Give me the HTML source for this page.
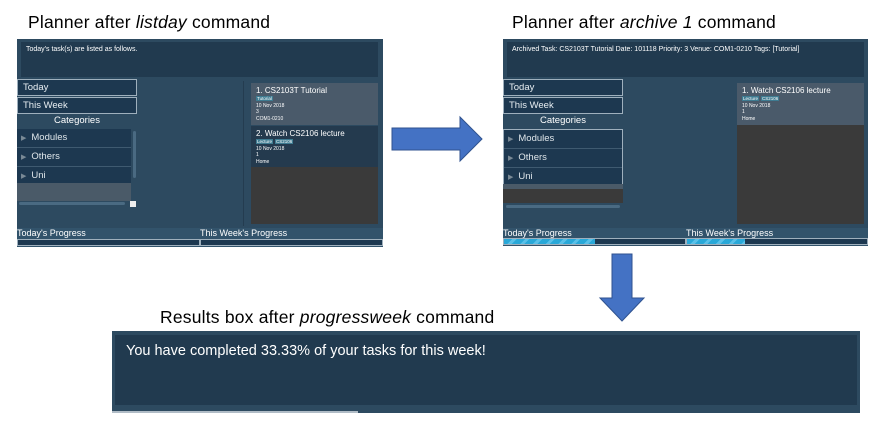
<!DOCTYPE html>
<html><head><meta charset="utf-8"><style>
*{margin:0;padding:0;box-sizing:border-box}
body{width:888px;height:446px;background:#fff;position:relative;overflow:hidden;font-family:"Liberation Sans",sans-serif}
.a{position:absolute}
.cap{font-size:17.5px;color:#000;white-space:nowrap;letter-spacing:0.2px}
.p{background:#2d4a60;overflow:hidden}
.rb{background:#213a4f;color:#fff;font-size:7px;padding:4px 5px;white-space:nowrap}
.btn{background:#1d3850;border:1px solid #9fb0bd;color:#e8eef2;font-size:9.5px;padding-left:5px;line-height:15px}
.cat{background:#1d3850;border-bottom:1px solid #3f5a70;color:#dfe6ea;font-size:9.5px;line-height:17px;padding-left:4px}
.cat b{font-weight:normal;color:#7a8a96;font-size:7px;margin-right:5px}
.card{color:#fff;font-size:5px;line-height:6.5px;padding:3px 5px}
.card .t{font-size:8px;line-height:10px}
.tag{background:#3e7b91;color:#fff;padding:0 1px;margin-right:2px;font-size:4.5px}
.pl{font-size:9px;color:#fff;line-height:11px}
.bar{background:#1d3850;border:1px solid #9fb0bd;height:7px}
.fill{height:100%;background:repeating-linear-gradient(135deg,#29a8d8 0 6px,#5ac0e8 6px 9px)}
</style></head><body>

<div class="a cap" style="left:28px;top:12px">Planner after <i>listday</i> command</div>
<div class="a cap" style="left:512px;top:12px">Planner after <i>archive 1</i> command</div>

<div class="a p" style="left:17px;top:39px;width:366px;height:208px">
 <div class="a rb" style="left:4px;top:3px;width:357px;height:35px">Today's task(s) are listed as follows.</div>
 <div class="a btn" style="left:0;top:40px;width:120px;height:17px">Today</div>
 <div class="a btn" style="left:0;top:58px;width:120px;height:17px">This Week</div>
 <div class="a" style="left:0;top:75px;width:120px;text-align:center;color:#fff;font-size:9.5px;line-height:14px">Categories</div>
 <div class="a" style="left:0;top:90px;width:114px">
  <div class="cat"><b>▶</b>Modules</div><div class="cat"><b>▶</b>Others</div><div class="cat"><b>▶</b>Uni</div>
 </div>
 <div class="a" style="left:0;top:144px;width:114px;height:18px;background:#4a5a68"></div>
 <div class="a" style="left:116px;top:92px;width:3px;height:47px;background:#4a6a82;border-radius:2px"></div>
 <div class="a" style="left:2px;top:163px;width:106px;height:3px;background:#4a6a82;border-radius:2px"></div>
 <div class="a" style="left:113px;top:162px;width:6px;height:6px;background:#eee"></div>
 <div class="a" style="left:226px;top:42px;width:1px;height:145px;background:#243c50"></div>
 <div class="a card" style="left:234px;top:44px;width:127px;height:42px;background:#4a5a6a"><div class="t">1. CS2103T Tutorial</div><span class="tag">Tutorial</span><br>10 Nov 2018<br>3<br>COM1-0210</div>
 <div class="a card" style="left:234px;top:87px;width:127px;height:41px;background:#243a4e"><div class="t">2. Watch CS2106 lecture</div><span class="tag">Lecture</span><span class="tag">CS2106</span><br>10 Nov 2018<br>1<br>Home</div>
 <div class="a" style="left:234px;top:128px;width:127px;height:57px;background:#3a3a3a"></div>
 <div class="a" style="left:0;top:189px;width:366px;height:19px;background:#32536b"></div>
 <div class="a pl" style="left:0;top:189px">Today's Progress</div>
 <div class="a pl" style="left:183px;top:189px">This Week's Progress</div>
 <div class="a bar" style="left:0;top:200px;width:183px"></div>
 <div class="a bar" style="left:183px;top:200px;width:183px"></div>
</div>

<svg class="a" style="left:390px;top:115px" width="95" height="50"><polygon points="2,13 70,13 70,2 92,24 70,46 70,35 2,35" fill="#4472c4" stroke="#2f528f" stroke-width="1"/></svg>

<div class="a p" style="left:503px;top:39px;width:365px;height:207px">
 <div class="a rb" style="left:4px;top:3px;width:357px;height:35px">Archived Task: CS2103T Tutorial Date: 101118 Priority: 3 Venue: COM1-0210 Tags: [Tutorial]</div>
 <div class="a btn" style="left:0;top:40px;width:120px;height:17px">Today</div>
 <div class="a btn" style="left:0;top:58px;width:120px;height:17px">This Week</div>
 <div class="a" style="left:0;top:75px;width:120px;text-align:center;color:#fff;font-size:9.5px;line-height:14px">Categories</div>
 <div class="a" style="left:0;top:90px;width:120px;border:1px solid #9fb0bd">
  <div class="cat"><b>▶</b>Modules</div><div class="cat"><b>▶</b>Others</div><div class="cat"><b>▶</b>Uni</div>
 </div>
 <div class="a" style="left:0;top:145px;width:120px;height:5px;background:#4a5a68"></div>
 <div class="a" style="left:0;top:150px;width:120px;height:14px;background:#3a3a3a"></div>
 <div class="a" style="left:3px;top:166px;width:114px;height:3px;background:#4a6a82;border-radius:2px"></div>
 <div class="a card" style="left:234px;top:44px;width:127px;height:42px;background:#4a5a6a"><div class="t">1. Watch CS2106 lecture</div><span class="tag">Lecture</span><span class="tag">CS2106</span><br>10 Nov 2018<br>1<br>Home</div>
 <div class="a" style="left:234px;top:86px;width:127px;height:99px;background:#3a3a3a"></div>
 <div class="a" style="left:0;top:189px;width:365px;height:18px;background:#32536b"></div>
 <div class="a pl" style="left:0;top:189px">Today's Progress</div>
 <div class="a pl" style="left:183px;top:189px">This Week's Progress</div>
 <div class="a bar" style="left:0;top:199px;width:183px"><div class="fill" style="width:50%"></div></div>
 <div class="a bar" style="left:183px;top:199px;width:182px"><div class="fill" style="width:32%"></div></div>
</div>

<svg class="a" style="left:598px;top:252px" width="50" height="72"><polygon points="14,2 34,2 34,46 46,46 24,69 2,46 14,46" fill="#4472c4" stroke="#2f528f" stroke-width="1"/></svg>

<div class="a cap" style="left:160px;top:307px">Results box after <i>progressweek</i> command</div>

<div class="a" style="left:112px;top:331px;width:748px;height:82px;background:#2d4a60">
 <div class="a" style="left:3px;top:4px;width:742px;height:70px;background:#213a4f;color:#fff;font-size:14.5px;padding:8px 11px">You have completed 33.33% of your tasks for this week!</div>
 <div class="a" style="left:0;top:80px;width:246px;height:2px;background:#b0bcc6"></div>
</div>
</body></html>
